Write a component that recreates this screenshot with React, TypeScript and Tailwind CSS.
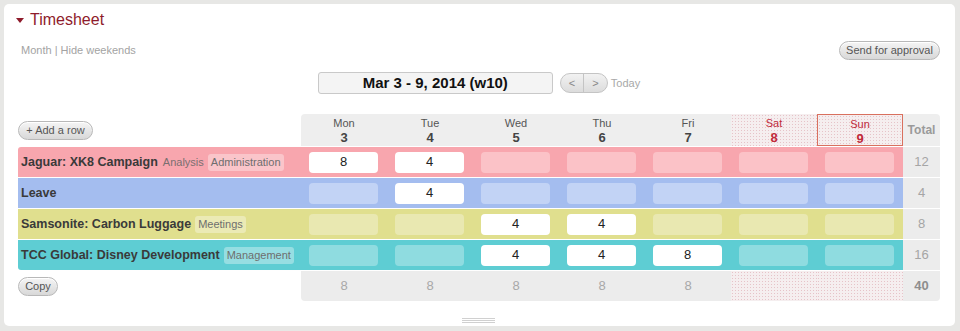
const days = [
  { name: "Mon", num: 3 },
  { name: "Tue", num: 4 },
  { name: "Wed", num: 5 },
  { name: "Thu", num: 6 },
  { name: "Fri", num: 7 },
  { name: "Sat", num: 8, weekend: true },
  { name: "Sun", num: 9, weekend: true, today: true },
];

type Row = {
  title: string;
  project?: string;
  tag?: string;
  bg: string;
  empty: string;
  hours: (number | null)[];
  total: number;
};

const rows: Row[] = [
  {
    title: "Jaguar: XK8 Campaign",
    project: "Analysis",
    tag: "Administration",
    bg: "bg-[#f8a6ae]",
    empty: "bg-[#fbc2c7]",
    hours: [8, 4, null, null, null, null, null],
    total: 12,
  },
  {
    title: "Leave",
    bg: "bg-[#a4bdef]",
    empty: "bg-[#c2d3f5]",
    hours: [null, 4, null, null, null, null, null],
    total: 4,
  },
  {
    title: "Samsonite: Carbon Luggage",
    tag: "Meetings",
    bg: "bg-[#e0df8e]",
    empty: "bg-[#e9e8b1]",
    hours: [null, null, 4, 4, null, null, null],
    total: 8,
  },
  {
    title: "TCC Global: Disney Development",
    tag: "Management",
    bg: "bg-[#5ecdd3]",
    empty: "bg-[#8fdce0]",
    hours: [null, null, 4, 4, 8, null, null],
    total: 16,
  },
];

const dots =
  "bg-[#f5eeef] bg-[radial-gradient(#e6c3c8_0.7px,transparent_0.9px)] bg-[length:3px_3px]";

function PillButton({ children, className = "" }: { children: React.ReactNode; className?: string }) {
  return (
    <button
      className={
        "h-[19px] rounded-full border border-[#b8b8b8] bg-linear-to-b from-[#f5f5f5] to-[#d8d8d8] text-[11px] leading-none text-[#555] shadow-[inset_0_1px_0_#fff] " +
        className
      }
    >
      {children}
    </button>
  );
}

export default function App() {
  return (
    <div className="w-[960px] h-[331px] bg-[#e7e7e5] p-[4px] pr-[5px] font-['Liberation_Sans',Arial,sans-serif]">
      <div className="h-[322px] rounded-[5px] bg-white pl-[14px] pr-[15px] flex flex-col">
        {/* Title */}
        <div className="mt-[6px] h-[20px] flex items-center">
          <span className="ml-[-2px] w-0 h-0 border-l-[4px] border-r-[4px] border-t-[5px] border-l-transparent border-r-transparent border-t-[#8e1b2b]" />
          <span className="ml-[6px] text-[16px] text-[#8e1b2b]">Timesheet</span>
        </div>

        {/* Links + approval */}
        <div className="mt-[10px] h-[20px] flex items-center justify-between">
          <span className="ml-[3px] text-[11px] text-[#a3a3a3]">Month | Hide weekends</span>
          <PillButton className="w-[101px]">Send for approval</PillButton>
        </div>

        {/* Week picker */}
        <div className="mt-[12px] h-[22px] flex items-center justify-center">
          <div className="w-[235px] h-[22px] rounded-[3px] border border-[#c9c9c9] bg-[#f4f4f4] flex items-center justify-center text-[15px] font-bold text-[#111]">
            Mar 3 - 9, 2014 (w10)
          </div>
          <div className="ml-[7px] h-[20px] w-[48px] rounded-full border border-[#c4c4c4] bg-linear-to-b from-[#f2f2f2] to-[#dcdcdc] flex text-[11px] text-[#888]">
            <span className="flex-1 flex items-center justify-center border-r border-[#c4c4c4]">&lt;</span>
            <span className="flex-1 flex items-center justify-center">&gt;</span>
          </div>
          <span className="ml-[3px] text-[11px] text-[#a8a8a8]">Today</span>
        </div>

        {/* Table */}
        <div className="mt-[20px] flex flex-col">
          {/* Header */}
          <div className="flex h-[32px]">
            <div className="w-[283px] flex items-center">
              <PillButton className="w-[75px]">+ Add a row</PillButton>
            </div>
            <div className="flex bg-[#eeeeee] rounded-tl-[4px]">
              {days.map((d) => (
                <div
                  key={d.name}
                  className={
                    "w-[86px] flex flex-col items-center pt-[3px] " +
                    (d.weekend ? dots + " " : "") +
                    (d.today ? "border border-[#d9705e] pt-[2px]" : "")
                  }
                >
                  <span className={"text-[11px] leading-[13px] " + (d.weekend ? "text-[#c02a3a]" : "text-[#555]")}>
                    {d.name}
                  </span>
                  <span
                    className={
                      "text-[13px] leading-[15px] font-bold " + (d.weekend ? "text-[#c02a3a]" : "text-[#444]")
                    }
                  >
                    {d.num}
                  </span>
                </div>
              ))}
            </div>
            <div className="w-[37px] bg-[#eeeeee] rounded-tr-[4px] flex items-center justify-center text-[12px] font-bold text-[#9a9a9a]">
              Total
            </div>
          </div>

          {/* Rows */}
          {rows.map((r, i) => (
            <div key={r.title} className="flex h-[30px] mt-[1px]">
              <div
                className={
                  "flex " +
                  r.bg +
                  (i === 0 ? " rounded-tl-[3px]" : "") +
                  (i === rows.length - 1 ? " rounded-bl-[3px]" : "")
                }
              >
                <div className="w-[283px] flex items-center pl-[3px] whitespace-nowrap">
                  <span className="text-[12.5px] font-bold text-[#3a3a3a]">{r.title}</span>
                  {r.project && <span className="ml-[5px] text-[11px] text-[#7a6f70]">{r.project}</span>}
                  {r.tag && (
                    <span className="ml-[4px] px-[3px] h-[17px] leading-[17px] rounded-[3px] bg-white/35 text-[11px] text-[#6e6e6e]">
                      {r.tag}
                    </span>
                  )}
                </div>
                {r.hours.map((h, j) => (
                  <div key={j} className="w-[86px] pl-[8px] pr-[9px] flex items-center">
                    <div
                      className={
                        "w-full h-[21px] rounded-[4px] flex items-center justify-center text-[13px] text-[#222] " +
                        (h === null ? r.empty : "bg-white")
                      }
                    >
                      {h}
                    </div>
                  </div>
                ))}
              </div>
              <div className="w-[37px] bg-[#ececec] flex items-center justify-center text-[13px] text-[#a5a5a5]">
                {r.total}
              </div>
            </div>
          ))}

          {/* Footer */}
          <div className="flex h-[30px] mt-[1px]">
            <div className="w-[283px] flex items-center">
              <PillButton className="w-[40px]">Copy</PillButton>
            </div>
            <div className="flex bg-[#ececec] rounded-bl-[4px]">
              {days.map((d, j) => (
                <div
                  key={d.name}
                  className={
                    "w-[86px] flex items-center justify-center text-[13px] text-[#a8a8a8] " + (d.weekend ? dots : "")
                  }
                >
                  {j < 5 ? 8 : ""}
                </div>
              ))}
            </div>
            <div className="w-[37px] bg-[#ececec] rounded-br-[4px] flex items-center justify-center text-[13px] font-bold text-[#8e8e8e]">
              40
            </div>
          </div>
        </div>

        {/* Resize handle */}
        <div className="mt-[17px] self-center w-[33px] flex flex-col gap-[1px] ml-[-2px]">
          <div className="h-px bg-[#d0d0d0]" />
          <div className="h-px bg-[#d0d0d0]" />
          <div className="h-px bg-[#d0d0d0]" />
        </div>
      </div>
    </div>
  );
}
